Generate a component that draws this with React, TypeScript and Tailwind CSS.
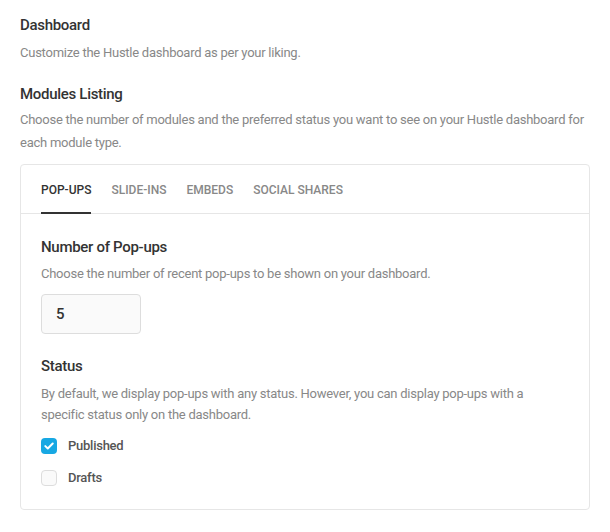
import { useState } from "react";

const tabs = ["Pop-ups", "Slide-ins", "Embeds", "Social Shares"];

function Check({ checked, label, onClick }: { checked: boolean; label: string; onClick: () => void }) {
  return (
    <label className="flex items-center gap-[11px] h-[16px] cursor-pointer" onClick={onClick}>
      {checked ? (
        <span className="w-[16px] h-[16px] rounded-[4px] bg-[#17a8e3] flex items-center justify-center">
          <svg width="10" height="8" viewBox="0 0 10 8" fill="none">
            <path d="M1.3 4.1L3.8 6.5L8.7 1.5" stroke="#fff" strokeWidth="2" strokeLinecap="round" strokeLinejoin="round" />
          </svg>
        </span>
      ) : (
        <span className="w-[16px] h-[16px] rounded-[4px] bg-[#fafafa] border border-[#ddd]" />
      )}
      <span className="text-[13px] font-medium tracking-[-0.25px] text-[#555]">{label}</span>
    </label>
  );
}

export default function App() {
  const [active, setActive] = useState(0);
  const [published, setPublished] = useState(true);
  const [drafts, setDrafts] = useState(false);

  return (
    <div className="bg-white w-[610px] h-[532px] px-[20px] pt-[14px]" style={{ fontFamily: "Roboto, 'Liberation Sans', sans-serif" }}>
      {/* Dashboard */}
      <h2 className="text-[15px] leading-[22px] font-medium tracking-[-0.3px] text-[#333]">Dashboard</h2>
      <p className="mt-[6px] text-[13px] leading-[22px] tracking-[-0.25px] text-[#888]">Customize the Hustle dashboard as per your liking.</p>

      <h3 className="mt-[19px] text-[15px] leading-[22px] font-medium tracking-[-0.3px] text-[#333]">Modules Listing</h3>
      <p className="mt-[3px] text-[13px] leading-[23px] tracking-[-0.25px] text-[#888]">
        Choose the number of modules and the preferred status you want to see on your Hustle dashboard for each module type.
      </p>

      {/* Card */}
      <div className="mt-[10px] border border-[#e6e6e6] rounded-[4px] w-[570px]">
        <div className="flex gap-[20px] px-[20px] border-b border-[#e6e6e6]">
          {tabs.map((t, i) => (
            <button
              key={t}
              onClick={() => setActive(i)}
              className={`h-[49px] pt-[3px] text-[12px] font-medium uppercase border-b-2 -mb-px ${
                i === active ? "text-[#333] border-[#333]" : "text-[#888] border-transparent"
              }`}
            >
              {t}
            </button>
          ))}
        </div>

        <div className="px-[20px] pt-[22px] pb-[23px]">
          <h4 className="text-[15px] leading-[22px] font-medium tracking-[-0.3px] text-[#333]">Number of Pop-ups</h4>
          <p className="mt-[5px] text-[13px] leading-[22px] tracking-[-0.25px] text-[#888]">Choose the number of recent pop-ups to be shown on your dashboard.</p>
          <input
            defaultValue="5"
            className="mt-[9px] w-[100px] h-[40px] px-[14px] bg-[#fafafa] border border-[#ddd] rounded-[4px] text-[15px] font-medium text-[#333] outline-none"
          />

          <h4 className="mt-[21px] text-[15px] leading-[22px] font-medium tracking-[-0.3px] text-[#333]">Status</h4>
          <p className="mt-[6px] text-[13px] leading-[21px] tracking-[-0.25px] text-[#888]">
            By default, we display pop-ups with any status. However, you can display pop-ups with a specific status only on the dashboard.
          </p>
          <div className="mt-[13px] flex flex-col gap-[16px]">
            <Check checked={published} label="Published" onClick={() => setPublished(!published)} />
            <Check checked={drafts} label="Drafts" onClick={() => setDrafts(!drafts)} />
          </div>
        </div>
      </div>
    </div>
  );
}
